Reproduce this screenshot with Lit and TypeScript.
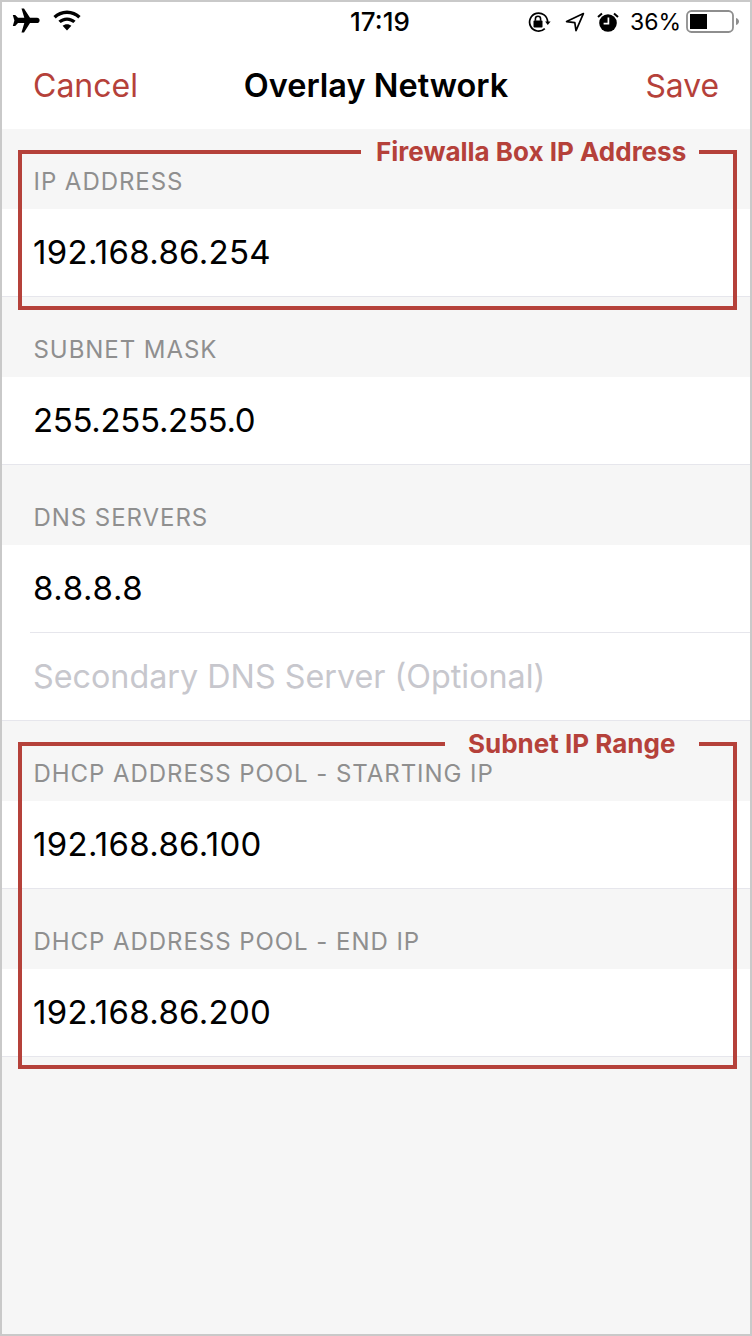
import { LitElement, html, css } from "lit";
import { customElement } from "lit/decorators.js";

const sections: { label: string; rows: { value: string; ph?: boolean; track?: number }[] }[] = [
  { label: "IP ADDRESS", rows: [{ value: "192.168.86.254", track: 0.3 }] },
  { label: "SUBNET MASK", rows: [{ value: "255.255.255.0", track: -0.33 }] },
  { label: "DNS SERVERS", rows: [{ value: "8.8.8.8", track: 0.67 }, { value: "Secondary DNS Server (Optional)", ph: true }] },
  { label: "DHCP ADDRESS POOL - STARTING IP", rows: [{ value: "192.168.86.100", track: 0.3 }] },
  { label: "DHCP ADDRESS POOL - END IP", rows: [{ value: "192.168.86.200", track: 0.3 }] },
];

@customElement("app-root")
export class AppRoot extends LitElement {
  static styles = css`
    :host { display: block; width: 752px; height: 1336px; font-family: Inter, "Liberation Sans", sans-serif; }
    * { box-sizing: border-box; }
    .frame { position: relative; width: 752px; height: 1336px; border: 2px solid #c9c9c9; background: #f6f6f6; overflow: hidden; }
    .top { background: #fff; height: 127px; display: flex; flex-direction: column; }
    .status { height: 40px; display: grid; grid-template-columns: 1fr auto 1fr; align-items: center; color: #000; }
    .s-left { display: flex; align-items: center; gap: 13px; padding: 0 0 3px 10px; }
    .s-time { font-size: 26px; font-weight: 500; line-height: 40px; margin-left: 8px; }
    .s-right { display: flex; align-items: center; justify-content: flex-end; gap: 13px; padding-right: 10px; }
    .s-right .gap-loc { margin-left: 14px; }
    .s-right > svg:nth-child(2) { margin-left: 1px; }
    .s-right > svg:nth-child(3) { margin-left: -1px; }
    .pct { font-size: 23px; line-height: 40px; margin-left: -2px; margin-right: -8px; }
    svg { display: block; }
    .nav { flex: 1; display: grid; grid-template-columns: 1fr auto 1fr; align-items: center; padding: 0 31px; font-size: 32px; }
    .nav .act { color: #b5413a; }
    .nav .save { text-align: right; font-size: 31.8px; }
    .nav .title { font-size: 32.5px; font-weight: 600; color: #000; }
    .head { height: 80px; padding: 38px 31px 0 31.5px; font-size: 24px; letter-spacing: 0.95px; line-height: 30px; color: #8f8f8f; }
    .group { background: #fff; border-bottom: 1px solid #e6e6ec; }
    .row { height: 87px; margin-left: 28px; padding-bottom: 2px; display: flex; align-items: center; font-size: 33px; color: #000; }
    .row + .row { height: 88px; padding-bottom: 0; border-top: 1px solid #e6e6ec; }
    .row > span { margin-left: 3px; }
    .row > span.ph { color: #c7c7cd; font-size: 32.3px; }
    .note { position: absolute; left: 16px; width: 719px; border: solid #b5413a; border-width: 0 4px 4px; }
    .note.a { top: 148px; height: 160px; }
    .note.b { top: 740px; height: 327px; }
    .note-top { position: absolute; left: -4px; right: -4px; top: 0; height: 20px; display: flex; align-items: flex-start; }
    .line { height: 4px; background: #b5413a; }
    .line.end { width: 38px; margin-left: auto; }
    .note-label { color: #b5413a; font-weight: 700; font-size: 26px; line-height: 4px; white-space: nowrap; position: absolute; }
    .a .line.start { width: 343px; }
    .b .line.start { width: 427px; }
    .a .note-label { left: 358px; }
    .b .note-label { left: 450px; }
  `;

  private icons() {
    return {
      plane: html`<svg width="28" height="25" viewBox="0 0 28 25"><path fill="#000" d="M9.5 0.5 L12 0.5 L18 9.8 L25 9.8 C26.6 9.8 27.6 11 27.6 12.4 C27.6 13.8 26.6 15 25 15 L18 15 L12 24.5 L9.5 24.5 L12.3 15 L6 15 L3.2 18 L0.8 18 L2.4 12.4 L0.8 7 L3.2 7 L6 9.8 L12.3 9.8 Z"/></svg>`,
      wifi: html`<svg width="28" height="21" viewBox="0 0 28 21"><path fill="#000" d="M14 0.5 C19.4 0.5 24 2.6 27.6 6 L25.3 8.4 C22.3 5.5 18.4 3.9 14 3.9 C9.6 3.9 5.7 5.5 2.7 8.4 L0.4 6 C4 2.6 8.6 0.5 14 0.5 Z M14 7.4 C17.4 7.4 20.3 8.7 22.6 10.8 L20.3 13.1 C18.6 11.6 16.5 10.7 14 10.7 C11.5 10.7 9.4 11.6 7.7 13.1 L5.4 10.8 C7.7 8.7 10.6 7.4 14 7.4 Z M14 14.2 C15.8 14.2 17.2 14.8 18.4 15.8 L14 20.4 L9.6 15.8 C10.8 14.8 12.2 14.2 14 14.2 Z"/></svg>`,
      lock: html`<svg width="23" height="20" viewBox="0 0 23 20"><path fill="none" stroke="#000" stroke-width="1.7" d="M19.6 10 A9 9 0 1 0 16.8 16.6"/><path fill="#000" d="M17.1 9.6 L22.6 9.6 L19.8 13 Z"/><rect x="5.5" y="8.6" width="9" height="7" rx="0.8" fill="#000"/><path fill="none" stroke="#000" stroke-width="1.6" d="M7.4 8.8 V6.8 A2.6 2.6 0 0 1 12.6 6.8 V8.8"/></svg>`,
      loc: html`<svg width="20" height="20" viewBox="0 0 20 20"><path fill="none" stroke="#000" stroke-width="1.7" stroke-linejoin="round" d="M18.4 1.6 L1.6 9.6 L9.8 10.6 L11 18.6 Z"/></svg>`,
      alarm: html`<svg width="22" height="20" viewBox="0 0 22 20"><circle cx="11" cy="11" r="8.8" fill="#000"/><path fill="none" stroke="#fff" stroke-width="1.7" d="M11.4 5.5 V11.6 H6.6"/><path fill="none" stroke="#000" stroke-width="2" d="M1 5 L5 1.4 M21 5 L17 1.4"/></svg>`,
      batt: html`<svg width="54" height="24" viewBox="0 0 54 24"><rect x="1" y="1" width="46" height="21" rx="4.5" fill="#fff" stroke="#8e8e8e" stroke-width="1.8"/><rect x="4" y="4" width="17" height="15" fill="#000"/><path fill="#8e8e8e" d="M50 8 C52 8.6 53 10 53 11.5 C53 13 52 14.4 50 15 Z"/></svg>`,
    };
  }

  render() {
    const i = this.icons();
    return html`
      <div class="frame">
        <div class="top">
          <div class="status">
            <div class="s-left">${i.plane}${i.wifi}</div>
            <div class="s-time">17:19</div>
            <div class="s-right">${i.lock}${i.loc}${i.alarm}<span class="pct">36%</span>${i.batt}</div>
          </div>
          <div class="nav">
            <span class="act">Cancel</span>
            <span class="title">Overlay Network</span>
            <span class="act save">Save</span>
          </div>
        </div>
        ${sections.map(
          (s) => html`
            <div class="head">${s.label}</div>
            <div class="group">
              ${s.rows.map(
                (r) => html`<div class="row"><span class=${r.ph ? "ph" : ""} style=${r.track ? `letter-spacing:${r.track}px` : ""}>${r.value}</span></div>`
              )}
            </div>
          `
        )}
        <div class="note a">
          <div class="note-top"><div class="line start"></div><span class="note-label">Firewalla Box IP Address</span><div class="line end"></div></div>
        </div>
        <div class="note b">
          <div class="note-top"><div class="line start"></div><span class="note-label">Subnet IP Range</span><div class="line end"></div></div>
        </div>
      </div>
    `;
  }
}
